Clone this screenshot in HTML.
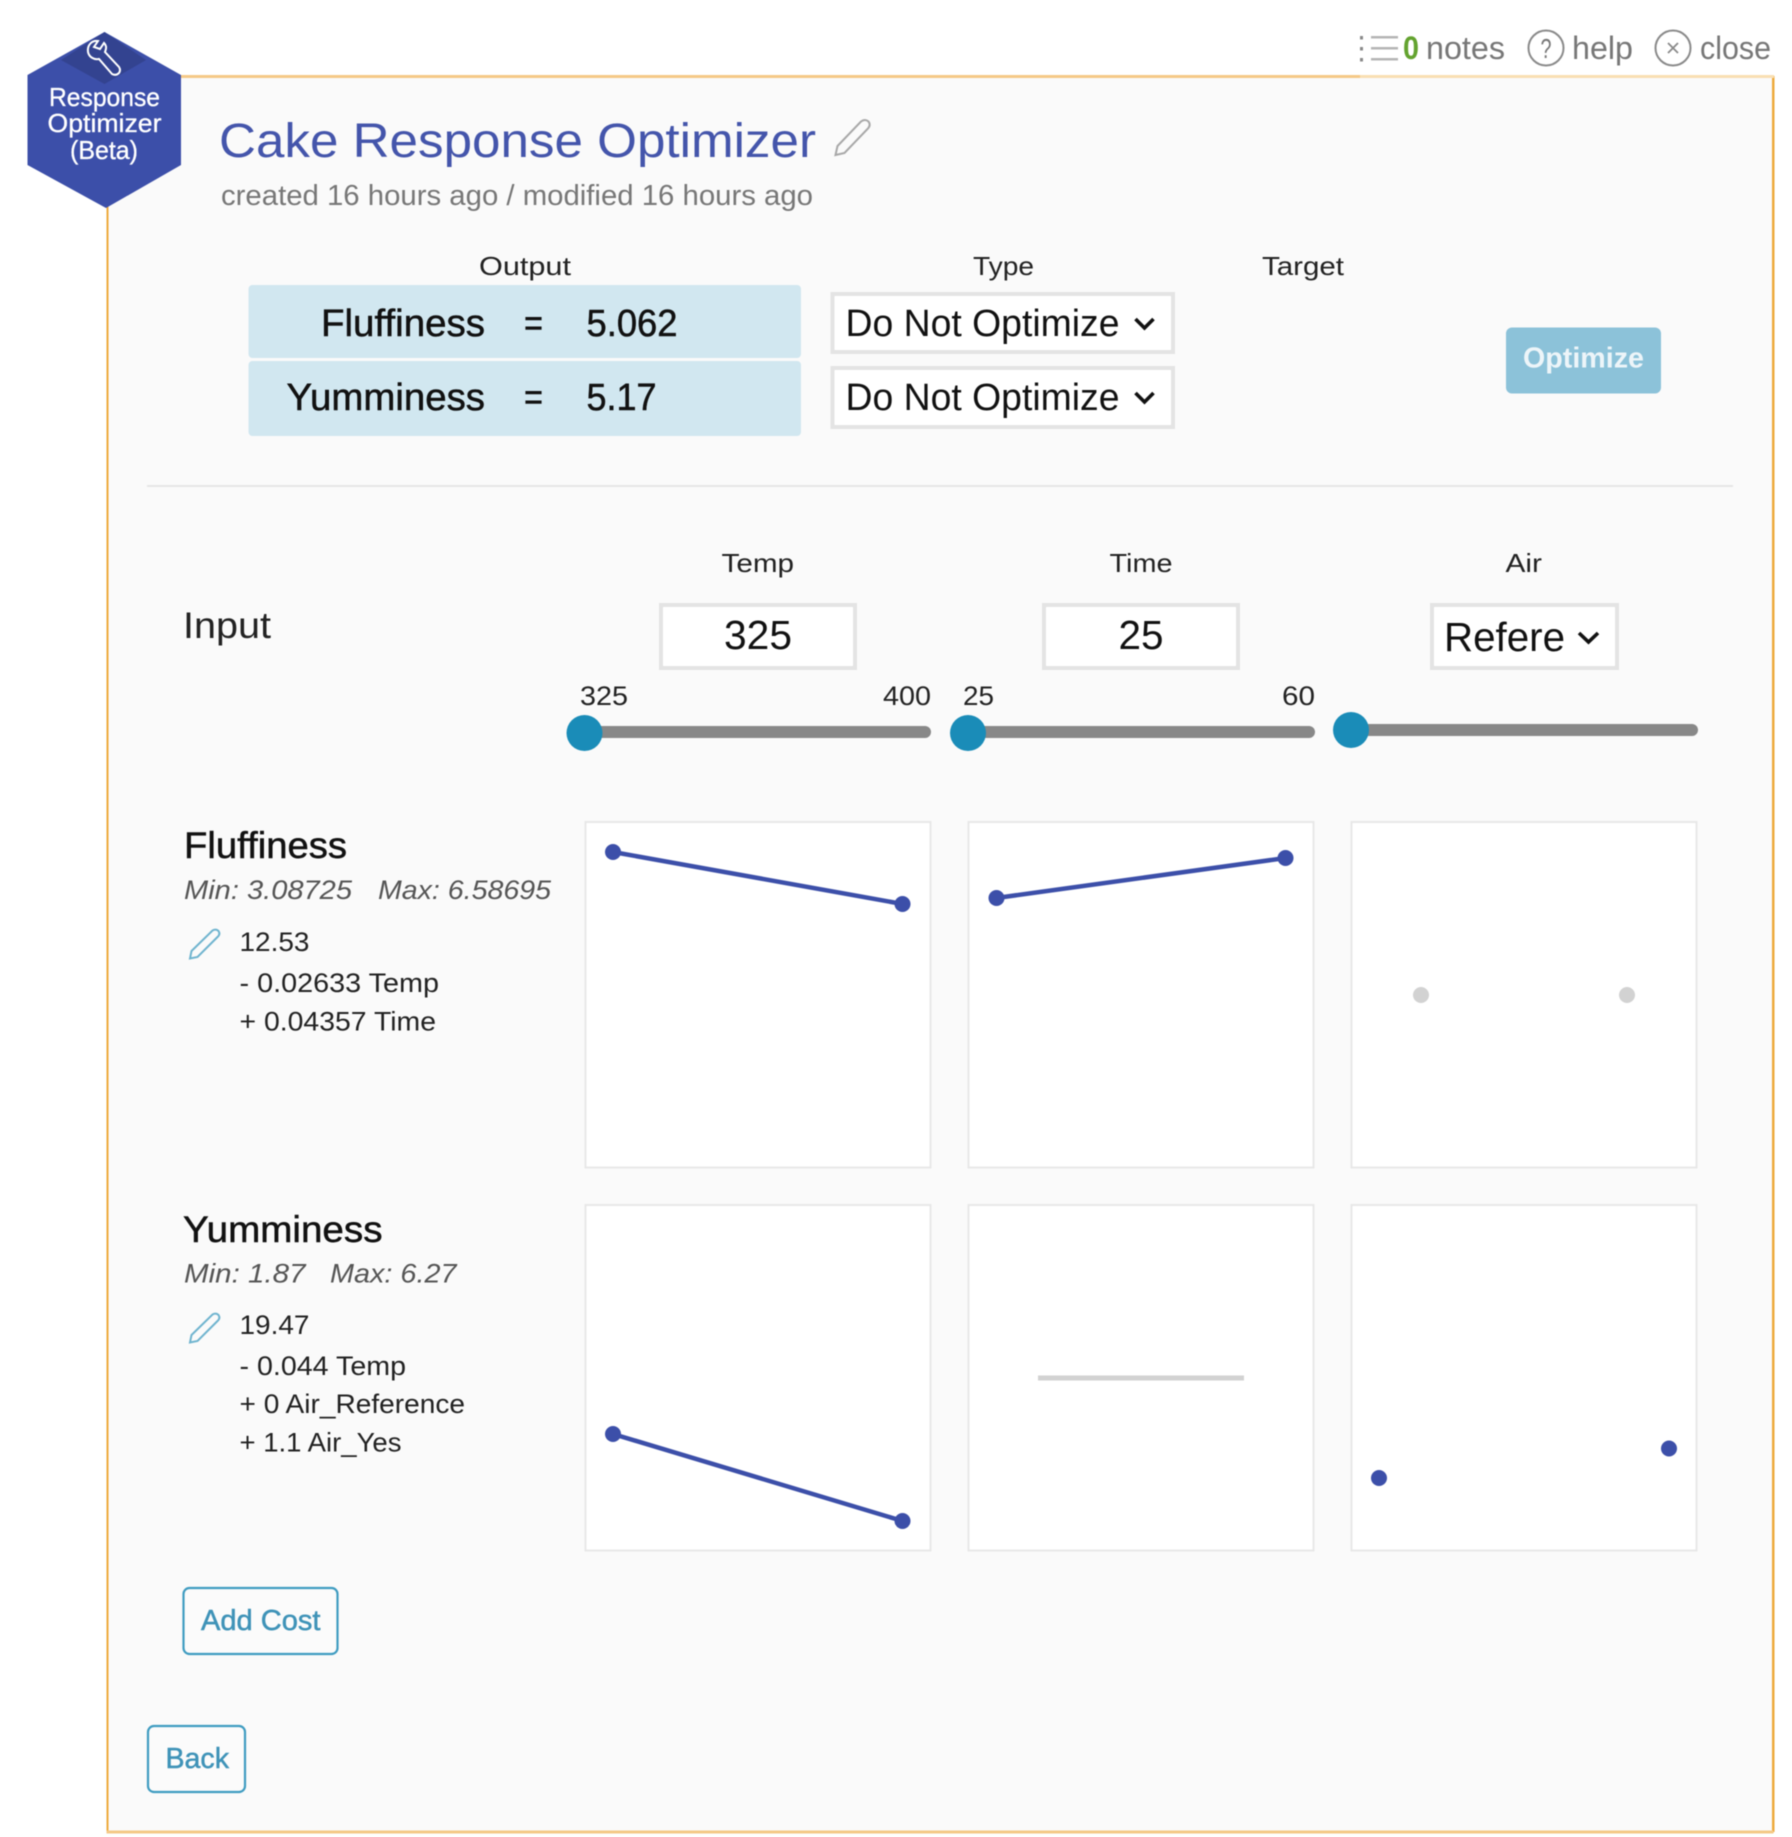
<!DOCTYPE html>
<html lang="en">
<head>
<meta charset="utf-8">
<title>Cake Response Optimizer</title>
<style>
html,body{margin:0;padding:0;background:#fff;width:1792px;height:1837px;overflow:hidden}
svg{display:block;filter:blur(.45px)}
text{font-family:"Liberation Sans",sans-serif;fill:#1a1a1a}
.g{fill:#777}
.lbl{font-size:26px;fill:#222}
.big{font-size:38px;fill:#111;stroke:#111;stroke-width:.5px}
.sel{font-size:38px;fill:#111}
.head{font-size:37px;fill:#111;stroke:#111;stroke-width:.5px}
.it{font-size:27px;font-style:italic;fill:#555}
.box{fill:#fff;stroke:#e4e4e4;stroke-width:4}
.chart{fill:#fff;stroke:#e8e8e8;stroke-width:2}
.ln{stroke:#3c4fa9;stroke-width:4.5;fill:none}
.dot{fill:#3c4fa9}
.gd{fill:#d2d2d2}
.tr{fill:#888}
.th{fill:#1a8cb8}
.ch{fill:none;stroke:#111;stroke-width:3.6}
.btn{fill:#fbfbfb;stroke:#3f9cc1;stroke-width:2.2}
.bt{font-size:29px;fill:#3f93b8;stroke:#3f93b8;stroke-width:.5px}
</style>
</head>
<body>
<svg xmlns="http://www.w3.org/2000/svg" width="1792" height="1837" viewBox="0 0 1792 1837">
<rect width="1792" height="1837" fill="#fff"/>

<!-- panel -->
<rect x="108" y="77" width="1664" height="1754" fill="#fafafa"/>
<rect x="106.500" y="165" width="2" height="1667" fill="#eeaa3c"/>
<rect x="1772" y="76" width="2.500" height="1756" fill="#eeaa3c"/>
<rect x="106.500" y="75" width="1254" height="3" fill="#f5c987"/>
<rect x="1360" y="75" width="414" height="3" fill="#f9dfb3"/>
<rect x="106.500" y="1830.500" width="1667" height="3" fill="#f4c987"/>

<!-- top links -->
<g fill="#8a8a8a">
<rect x="1360" y="36" width="3" height="3.500"/>
<rect x="1360" y="47" width="3" height="3.500"/>
<rect x="1360" y="58" width="3" height="3.500"/>
</g>
<g fill="#b5b5b5">
<rect x="1371" y="36" width="27" height="2.500"/>
<rect x="1371" y="47" width="27" height="2.500"/>
<rect x="1371" y="58" width="27" height="2.500"/>
</g>
<text x="1403" y="59" font-size="32" font-weight="bold" style="fill:#63a32f" textLength="16" lengthAdjust="spacingAndGlyphs">0</text>
<text class="g" x="1426" y="59" font-size="32" textLength="79" lengthAdjust="spacingAndGlyphs">notes</text>
<circle cx="1546" cy="48" r="17.500" fill="none" stroke="#8a8a8a" stroke-width="2"/>
<text class="g" x="1540.500" y="58" font-size="28" textLength="11" lengthAdjust="spacingAndGlyphs">?</text>
<text class="g" x="1572" y="59" font-size="32" textLength="61" lengthAdjust="spacingAndGlyphs">help</text>
<circle cx="1673" cy="48" r="17.500" fill="none" stroke="#8a8a8a" stroke-width="2"/>
<path d="M1668 43L1678 53M1678 43L1668 53" stroke="#8a8a8a" stroke-width="1.800" fill="none"/>
<text class="g" x="1700" y="59" font-size="32" textLength="71" lengthAdjust="spacingAndGlyphs">close</text>

<!-- hexagon -->
<polygon points="104.500,32 181,75 181,165 106,208 27.500,165 27.500,75" fill="#3c4fa9"/>
<polygon points="104.500,32 146,60 104.500,84 61,60" fill="#334390"/>
<path d="M98 41C92 40 87 45 88 52C89 57 94 60 99 59L112 74Q116 76 119 73Q121 70 119 67L105 52C107 47 106 45 104 43L100 49L94 47Z" fill="none" stroke="#fff" stroke-width="2"/>
<g>
<text x="49" y="106" font-size="26" style="fill:#fff;stroke:#fff;stroke-width:.3px" textLength="111" lengthAdjust="spacingAndGlyphs">Response</text>
<text x="47.500" y="132" font-size="26" style="fill:#fff;stroke:#fff;stroke-width:.3px" textLength="114" lengthAdjust="spacingAndGlyphs">Optimizer</text>
<text x="70" y="159" font-size="26" style="fill:#fff;stroke:#fff;stroke-width:.3px" textLength="68" lengthAdjust="spacingAndGlyphs">(Beta)</text>
</g>

<!-- title -->
<text x="219" y="157" font-size="48" style="fill:#4455ab" textLength="597" lengthAdjust="spacingAndGlyphs">Cake Response Optimizer</text>
<path d="M835.500 155L837.500 146L861 121.500Q865 118.500 868.500 121.500Q871 125 868 128.500L844.500 153Z" fill="none" stroke="#a8a8a8" stroke-width="2"/>
<text class="g" x="221" y="205" font-size="29" textLength="592" lengthAdjust="spacingAndGlyphs">created 16 hours ago / modified 16 hours ago</text>

<!-- output header -->
<text class="lbl" x="479" y="275" textLength="92" lengthAdjust="spacingAndGlyphs">Output</text>
<text class="lbl" x="973" y="275" textLength="61" lengthAdjust="spacingAndGlyphs">Type</text>
<text class="lbl" x="1262" y="275" textLength="82" lengthAdjust="spacingAndGlyphs">Target</text>

<!-- output rows -->
<rect x="248.500" y="285" width="552.500" height="73" rx="4" fill="#d1e7f0"/>
<rect x="248.500" y="361" width="552.500" height="75" rx="4" fill="#d1e7f0"/>
<text class="big" x="321" y="336" textLength="164" lengthAdjust="spacingAndGlyphs">Fluffiness</text>
<text class="big" x="524" y="336" textLength="19" lengthAdjust="spacingAndGlyphs">=</text>
<text class="big" x="586.500" y="336" textLength="91" lengthAdjust="spacingAndGlyphs">5.062</text>
<text class="big" x="286.500" y="410" textLength="198.500" lengthAdjust="spacingAndGlyphs">Yumminess</text>
<text class="big" x="524" y="410" textLength="19" lengthAdjust="spacingAndGlyphs">=</text>
<text class="big" x="586.500" y="410" textLength="70" lengthAdjust="spacingAndGlyphs">5.17</text>

<!-- type selects -->
<rect class="box" x="832.500" y="294" width="340.500" height="58"/>
<rect class="box" x="832.500" y="368" width="340.500" height="59"/>
<text class="sel" x="845.500" y="336" textLength="274" lengthAdjust="spacingAndGlyphs">Do Not Optimize</text>
<text class="sel" x="845.500" y="410" textLength="274" lengthAdjust="spacingAndGlyphs">Do Not Optimize</text>
<polyline class="ch" points="1135.500,319 1144.500,328 1153.500,319"/>
<polyline class="ch" points="1135.500,393 1144.500,402 1153.500,393"/>

<!-- optimize -->
<rect x="1506" y="327.500" width="155" height="66" rx="6" fill="#8cc2d9"/>
<text x="1523" y="367.500" font-size="29" font-weight="bold" style="fill:#fff;opacity:.85" textLength="121" lengthAdjust="spacingAndGlyphs">Optimize</text>

<!-- divider -->
<rect x="147" y="485" width="1586" height="2" fill="#e6e6e6"/>

<!-- inputs header -->
<text class="lbl" x="721.500" y="572" textLength="72.500" lengthAdjust="spacingAndGlyphs">Temp</text>
<text class="lbl" x="1109.500" y="572" textLength="63" lengthAdjust="spacingAndGlyphs">Time</text>
<text class="lbl" x="1505.500" y="572" textLength="36.500" lengthAdjust="spacingAndGlyphs">Air</text>
<text x="183" y="638" font-size="37" style="fill:#222" textLength="88" lengthAdjust="spacingAndGlyphs">Input</text>

<rect class="box" x="661" y="605" width="194" height="63"/>
<rect class="box" x="1044" y="605" width="194" height="63"/>
<rect class="box" x="1432" y="605" width="185" height="63"/>
<text x="724" y="649" font-size="41" style="fill:#111" textLength="68" lengthAdjust="spacingAndGlyphs">325</text>
<text x="1118.500" y="649" font-size="41" style="fill:#111" textLength="45" lengthAdjust="spacingAndGlyphs">25</text>
<text x="1444" y="651" font-size="41" style="fill:#111" textLength="121" lengthAdjust="spacingAndGlyphs">Refere</text>
<polyline class="ch" points="1579,633 1588.500,642 1598,633"/>

<!-- sliders -->
<text x="580" y="705" font-size="27" style="fill:#222" textLength="48" lengthAdjust="spacingAndGlyphs">325</text>
<text x="883" y="705" font-size="27" style="fill:#222" textLength="48" lengthAdjust="spacingAndGlyphs">400</text>
<text x="963" y="705" font-size="27" style="fill:#222" textLength="31" lengthAdjust="spacingAndGlyphs">25</text>
<text x="1282" y="705" font-size="27" style="fill:#222" textLength="33" lengthAdjust="spacingAndGlyphs">60</text>
<rect class="tr" x="590" y="726" width="341" height="12" rx="6"/>
<rect class="tr" x="972" y="726" width="343" height="12" rx="6"/>
<rect class="tr" x="1355" y="724" width="343" height="12" rx="6"/>
<circle class="th" cx="584.500" cy="733" r="18"/>
<circle class="th" cx="968" cy="733" r="18"/>
<circle class="th" cx="1351" cy="730" r="18"/>

<!-- charts -->
<rect class="chart" x="585.500" y="822" width="345" height="345.500"/>
<rect class="chart" x="968.500" y="822" width="345" height="345.500"/>
<rect class="chart" x="1351.500" y="822" width="345" height="345.500"/>
<rect class="chart" x="585.500" y="1205" width="345" height="345.500"/>
<rect class="chart" x="968.500" y="1205" width="345" height="345.500"/>
<rect class="chart" x="1351.500" y="1205" width="345" height="345.500"/>

<path class="ln" d="M613 852L902.500 904"/>
<circle class="dot" cx="613" cy="852" r="8"/>
<circle class="dot" cx="902.500" cy="904" r="8"/>
<path class="ln" d="M996.500 898L1285.500 858"/>
<circle class="dot" cx="996.500" cy="898" r="8"/>
<circle class="dot" cx="1285.500" cy="858" r="8"/>
<circle class="gd" cx="1421" cy="995" r="8"/>
<circle class="gd" cx="1627" cy="995" r="8"/>
<path class="ln" d="M613 1434L902.500 1521"/>
<circle class="dot" cx="613" cy="1434" r="8"/>
<circle class="dot" cx="902.500" cy="1521" r="8"/>
<rect x="1038" y="1375.500" width="206" height="5" fill="#d2d2d2"/>
<circle class="dot" cx="1379" cy="1478" r="8"/>
<circle class="dot" cx="1669" cy="1448.500" r="8"/>

<!-- fluffiness info -->
<text class="head" x="184" y="858" textLength="163" lengthAdjust="spacingAndGlyphs">Fluffiness</text>
<text class="it" x="184" y="899" textLength="168" lengthAdjust="spacingAndGlyphs">Min: 3.08725</text>
<text class="it" x="378" y="899" textLength="173" lengthAdjust="spacingAndGlyphs">Max: 6.58695</text>
<path d="M190 958.500L191.500 951L212.500 930.500Q216 928.500 218.500 931Q220.500 934 218 936.500L197.500 957Z" fill="none" stroke="#6fb4cf" stroke-width="2"/>
<text x="239.500" y="951" font-size="27" style="fill:#222" textLength="70" lengthAdjust="spacingAndGlyphs">12.53</text>
<text x="239.500" y="992" font-size="27" style="fill:#222" textLength="199.500" lengthAdjust="spacingAndGlyphs">- 0.02633 Temp</text>
<text x="239.500" y="1030.500" font-size="27" style="fill:#222" textLength="196.500" lengthAdjust="spacingAndGlyphs">+ 0.04357 Time</text>

<!-- yumminess info -->
<text class="head" x="183" y="1242" textLength="199.500" lengthAdjust="spacingAndGlyphs">Yumminess</text>
<text class="it" x="184" y="1282.500" textLength="121.500" lengthAdjust="spacingAndGlyphs">Min: 1.87</text>
<text class="it" x="330" y="1282.500" textLength="126.500" lengthAdjust="spacingAndGlyphs">Max: 6.27</text>
<path d="M190 1342.500L191.500 1335L212.500 1314.500Q216 1312.500 218.500 1315Q220.500 1318 218 1320.500L197.500 1341Z" fill="none" stroke="#6fb4cf" stroke-width="2"/>
<text x="239.500" y="1334" font-size="27" style="fill:#222" textLength="70" lengthAdjust="spacingAndGlyphs">19.47</text>
<text x="239.500" y="1375" font-size="27" style="fill:#222" textLength="166.500" lengthAdjust="spacingAndGlyphs">- 0.044 Temp</text>
<text x="239.500" y="1413" font-size="27" style="fill:#222" textLength="225.500" lengthAdjust="spacingAndGlyphs">+ 0 Air_Reference</text>
<text x="239.500" y="1451.500" font-size="27" style="fill:#222" textLength="162" lengthAdjust="spacingAndGlyphs">+ 1.1 Air_Yes</text>

<!-- buttons -->
<rect class="btn" x="183.500" y="1588" width="154" height="66" rx="6"/>
<text class="bt" x="201" y="1630" textLength="119.500" lengthAdjust="spacingAndGlyphs">Add Cost</text>
<rect class="btn" x="148" y="1726" width="97" height="66" rx="6"/>
<text class="bt" x="165.500" y="1768" textLength="63.500" lengthAdjust="spacingAndGlyphs">Back</text>
</svg>
</body>
</html>
